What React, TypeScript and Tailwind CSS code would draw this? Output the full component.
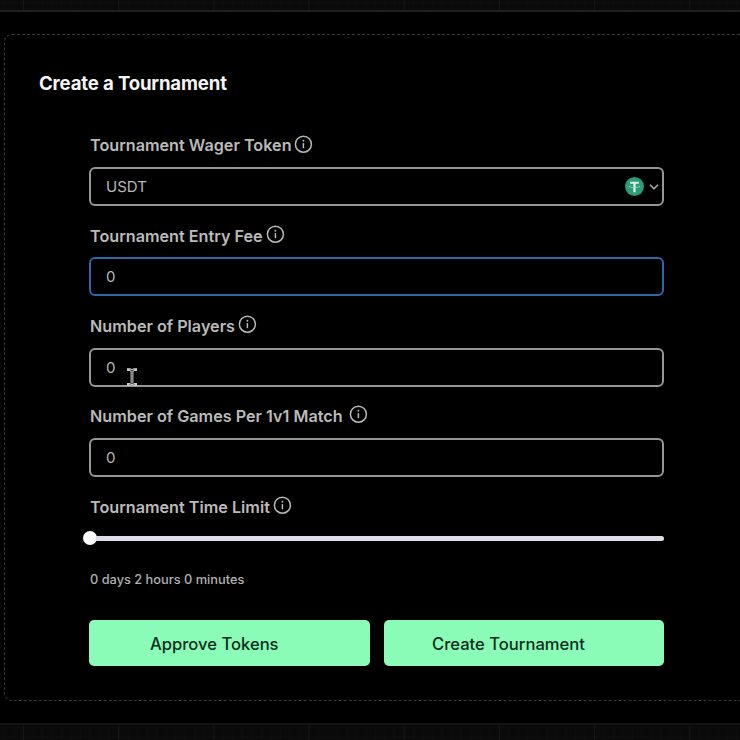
import { ChevronDown } from "lucide-react";
import type { ReactNode } from "react";

const GRID =
  "bg-[#0a0a0b] bg-[linear-gradient(90deg,#161618_1px,transparent_1px),linear-gradient(90deg,#0d0d0f_1px,transparent_1px),linear-gradient(#0f0f11_1px,transparent_1px)] bg-[size:95.2px_100%,9.52px_100%,100%_9.52px] bg-[position:23px_0,4px_0,0_2px]";

function InfoIcon() {
  return (
    <svg width="19" height="19" viewBox="0 0 19 19" fill="none" className="ml-[4px] shrink-0 -translate-y-px">
      <circle cx="9.4" cy="9.2" r="8" stroke="#b8b8b8" strokeWidth="1.5" />
      <path d="M9.4 8.1v5.1" stroke="#b8b8b8" strokeWidth="1.5" />
      <circle cx="9.4" cy="5.8" r="0.95" fill="#b8b8b8" />
    </svg>
  );
}

function Label({ text, width }: { text: string; width: string }) {
  return (
    <div className="flex h-6 items-center text-[16.2px] font-semibold text-[#bababa]">
      <span className={`whitespace-nowrap pt-px pl-px ${width}`}>{text}</span>
      <InfoIcon />
    </div>
  );
}

function Field({ label, width, box, children }: { label: string; width: string; box: string; children: ReactNode }) {
  return (
    <div className="h-[90.3px]">
      <Label text={label} width={width} />
      <div className={`mt-[10px] flex h-[39px] items-center rounded-[6px] border-2 pl-[15px] text-[15px] text-[#b8b8b8] ${box}`}>
        {children}
      </div>
    </div>
  );
}

function TetherIcon() {
  return (
    <svg width="19" height="19" viewBox="0 0 32 32" className="ml-auto">
      <circle cx="16" cy="16" r="16" fill="#2b9b78" />
      <path
        fill="#d9f5e8"
        d="M17.92 17.38c-.11.01-.68.04-1.94.04-1.01 0-1.72-.03-1.97-.04-3.89-.17-6.79-.85-6.79-1.66s2.9-1.49 6.79-1.66v2.64c.25.02.98.06 1.99.06 1.21 0 1.81-.05 1.92-.06v-2.64c3.88.17 6.78.85 6.78 1.66s-2.9 1.49-6.78 1.66m0-3.59v-2.37h5.41V7.82H8.6v3.6h5.41v2.37c-4.4.2-7.7 1.07-7.7 2.12s3.3 1.91 7.7 2.12v7.58h3.91v-7.59c4.39-.2 7.68-1.07 7.68-2.11s-3.29-1.91-7.68-2.12"
      />
    </svg>
  );
}

function TextCursor() {
  return (
    <svg width="12" height="18" viewBox="0 0 12 18" fill="none" className="absolute top-[368px] left-[126px]">
      <path d="M1 1.7h3l2 1.3 2-1.3h3M1 16.3h3l2-1.3 2 1.3h3M6 3v12" stroke="#cfcfcf" strokeWidth="2.8" />
      <path d="M6 2.5v13M3.5 1.6 6 2.8l2.5-1.2M3.5 16.4 6 15.2l2.5 1.2" stroke="#222" strokeWidth="0.8" />
    </svg>
  );
}

const gray = "border-[#969696]";

export default function App() {
  return (
    <div className="relative flex h-[740px] w-[740px] flex-col overflow-hidden bg-black font-['Inter',sans-serif]">
      <div className={`h-[12px] shrink-0 border-b-2 border-[#202021] ${GRID}`} />
      <div className="h-[711px] shrink-0 pt-[22px] pl-[4px]">
        <section className="h-[667px] w-[900px] rounded-[8px] border border-dashed border-[#3a3a3a] pt-[34px] pl-[34px]">
          <h1 className="h-7 text-[18.6px] leading-7 font-bold tracking-[-0.15px] text-[#f4f4f4]">Create a Tournament</h1>
          <div className="mt-[36px] ml-[50px] w-[575px]">
            <Field label="Tournament Wager Token" width="w-[201px]" box={gray}>
              <span className="pt-[2px]">USDT</span>
              <TetherIcon />
              <ChevronDown size={14} strokeWidth={3} className="mr-[1px] ml-[3px] text-[#a5a5a5]" />
            </Field>
            <Field label="Tournament Entry Fee" width="w-[173px]" box="border-[#2f67a8]">
              <span className="pt-[1px]">0</span>
            </Field>
            <Field label="Number of Players" width="w-[145px]" box={gray}>
              <span className="pt-[2px]">0</span>
            </Field>
            <Field label="Number of Games Per 1v1 Match" width="w-[256px]" box={gray}>
              <span className="pt-[2px]">0</span>
            </Field>
            <Label text="Tournament Time Limit" width="w-[180px]" />
            <div className="-ml-[6px] mt-[13px] flex h-[14px] items-center">
              <div className="size-[14px] shrink-0 rounded-full bg-white" />
              <div className="-ml-px h-[5px] flex-1 rounded-r-full bg-[#dfdce6]" />
            </div>
            <p className="mt-[24.5px] h-5 pl-px text-[12.8px] leading-5 font-medium text-[#b0b0b0]">0 days 2 hours 0 minutes</p>
            <div className="mt-[30.5px] flex gap-[14px] text-[16.6px] font-medium text-[#0b2e1c]">
              <button className="h-[46px] w-[280.5px] rounded-[5px] bg-[#8afcb8] pt-[2px] pr-[30px]">Approve Tokens</button>
              <button className="h-[46px] w-[280px] rounded-[5px] bg-[#8afcb8] pt-[2px] pr-[30px]">Create Tournament</button>
            </div>
          </div>
        </section>
      </div>
      <div className={`flex-1 border-t-2 border-[#141415] ${GRID}`} />
      <TextCursor />
    </div>
  );
}
